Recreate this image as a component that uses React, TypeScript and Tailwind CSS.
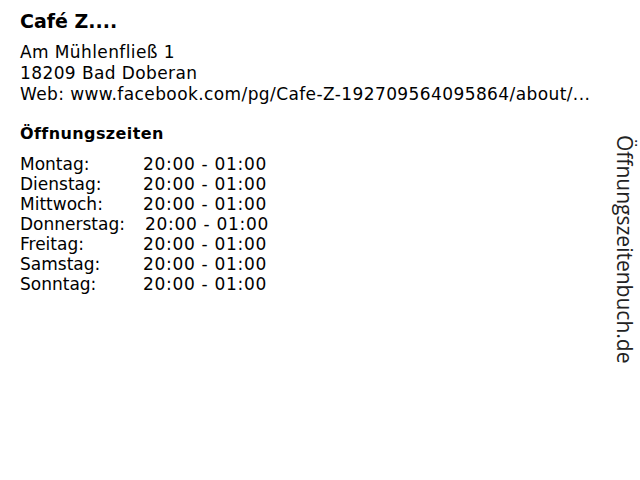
import React from 'react';

const hours = [
  ['Montag:', '20:00 - 01:00'],
  ['Dienstag:', '20:00 - 01:00'],
  ['Mittwoch:', '20:00 - 01:00'],
  ['Donnerstag:', '20:00 - 01:00'],
  ['Freitag:', '20:00 - 01:00'],
  ['Samstag:', '20:00 - 01:00'],
  ['Sonntag:', '20:00 - 01:00'],
];

export default function App() {
  return (
    <div className="flex h-[480px] w-[640px] bg-white text-black font-['DejaVu_Sans',sans-serif]">
      <div className="flex-1 pl-5 pt-[8px]">
        <h1 className="text-[19px] font-bold leading-[26px]">Café Z....</h1>
        <div className="mt-[8px] text-[17px] leading-[21px] tracking-[0.4px]">
          <div>Am Mühlenfließ 1</div>
          <div>18209 Bad Doberan</div>
          <div>Web: www.facebook.com/pg/Cafe-Z-192709564095864/about/...</div>
        </div>
        <h2 className="mt-[18px] text-[16px] font-bold leading-[21px] tracking-[0.4px]">Öffnungszeiten</h2>
        <div className="mt-[10px] text-[17px] leading-[20px]">
          {hours.map(([day, time]) => (
            <div key={day} className="flex">
              <span className="box-border min-w-[123px] pr-[20px]">{day}</span>
              <span className="tracking-[0.7px]">{time}</span>
            </div>
          ))}
        </div>
      </div>
      <div className="w-[40px] pt-[135px] pl-[13px]">
        <div className="[writing-mode:vertical-rl] text-[21px] leading-[24px] text-[#222] font-['Open_Sans',sans-serif]">
          Öffnungszeitenbuch.de
        </div>
      </div>
    </div>
  );
}
